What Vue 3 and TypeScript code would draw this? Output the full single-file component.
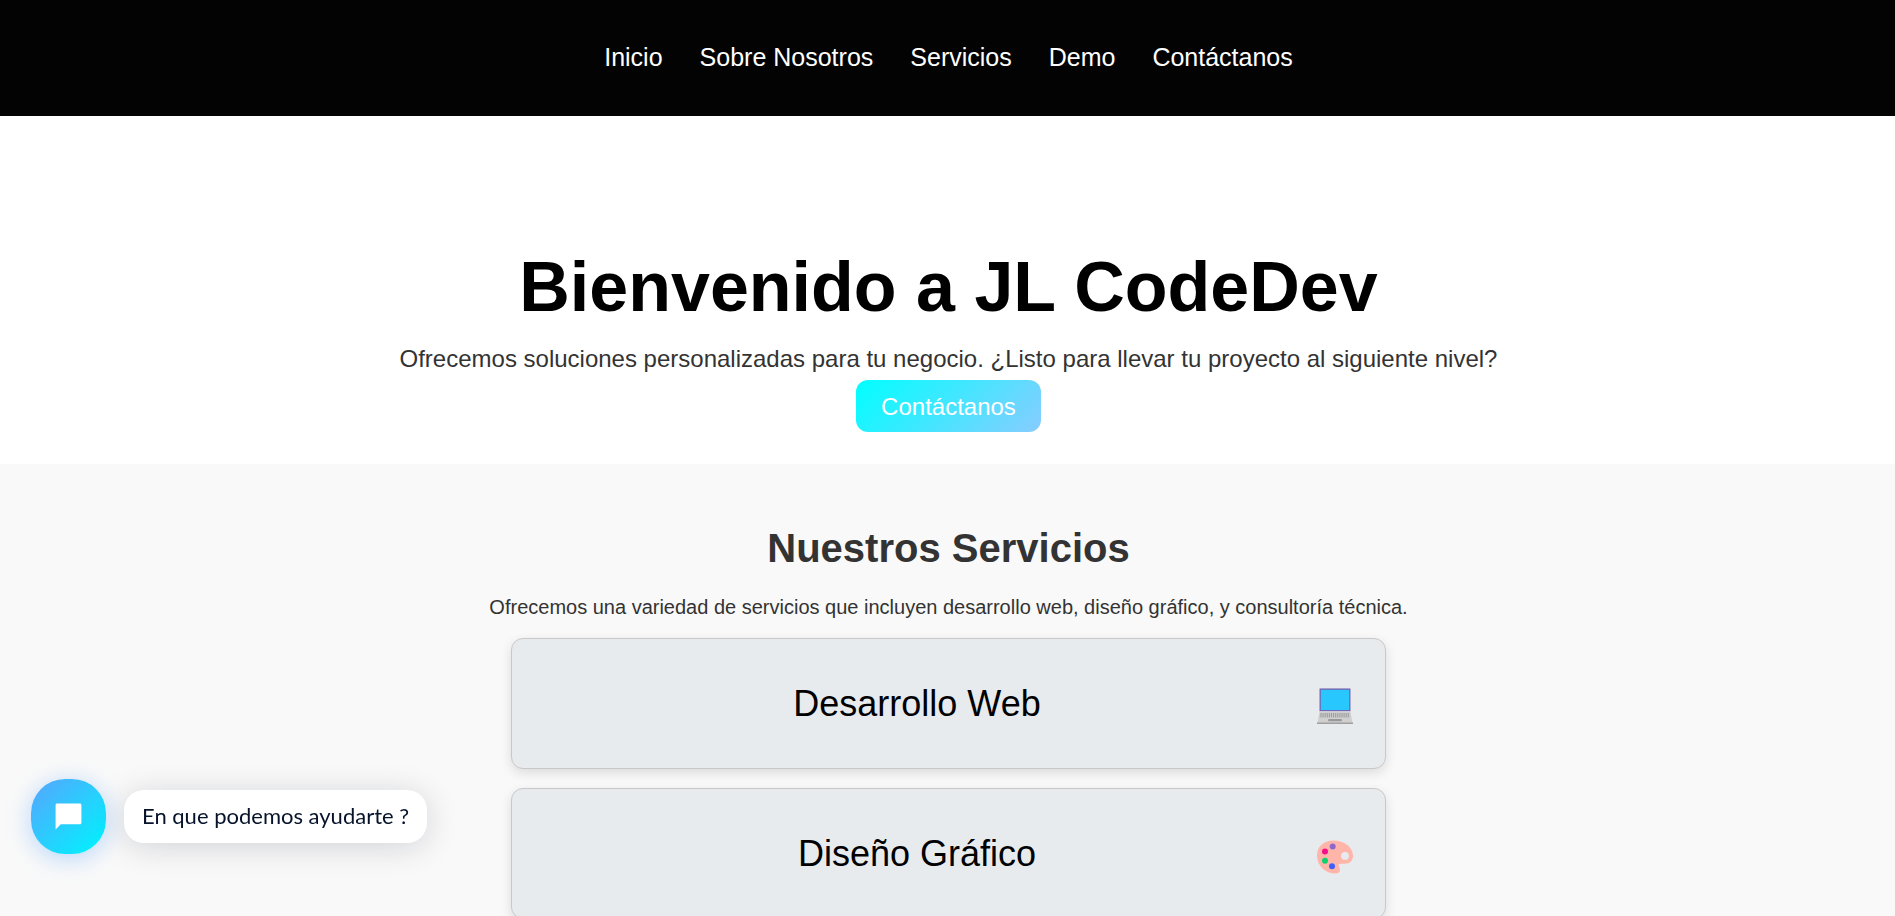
<script setup lang="ts">
interface Link {
  label: string
  href: string
}

interface Service {
  name: string
  icon: 'laptop' | 'palette'
}

const links: Link[] = [
  { label: 'Inicio', href: '#inicio' },
  { label: 'Sobre Nosotros', href: '#nosotros' },
  { label: 'Servicios', href: '#servicios' },
  { label: 'Demo', href: '#demo' },
  { label: 'Contáctanos', href: '#contacto' },
]

const services: Service[] = [
  { name: 'Desarrollo Web', icon: 'laptop' },
  { name: 'Diseño Gráfico', icon: 'palette' },
]

// Horizontal positions of the laptop's key columns
const keys: number[] = Array.from({ length: 14 }, (_, i) => 4 + i * 2.1)
</script>

<template>
  <div class="page">
    <header class="header">
      <nav class="nav">
        <a v-for="link in links" :key="link.href" :href="link.href">{{ link.label }}</a>
      </nav>
    </header>

    <main>
      <section id="inicio" class="hero">
        <h1>Bienvenido a JL CodeDev</h1>
        <p>Ofrecemos soluciones personalizadas para tu negocio. ¿Listo para llevar tu proyecto al siguiente nivel?</p>
        <a class="cta" href="#contacto">Contáctanos</a>
      </section>

      <section id="servicios" class="services">
        <h2>Nuestros Servicios</h2>
        <p>Ofrecemos una variedad de servicios que incluyen desarrollo web, diseño gráfico, y consultoría técnica.</p>
        <div class="cards">
          <button v-for="service in services" :key="service.name" type="button" class="card">
            <span class="card-name">{{ service.name }}</span>
            <span class="card-icon">
              <svg v-if="service.icon === 'laptop'" viewBox="0 0 36 36" aria-hidden="true">
                <path d="M3.4 0h29.200q1 0 1 1v22.400H2.400V1q0-1 1-1z" fill="#a79fca" />
                <path d="M2.800 1h30.400v22H2.800z" fill="#7662b3" />
                <path d="M3.800 1.800h28.400v20.300H3.800z" fill="#28c8ff" />
                <path d="M2.600 23.400h30.800L35.600 35H.4z" fill="#d0d0d0" />
                <path d="M3 24.800h30l.8 5H2.200z" fill="#cacaca" />
                <path v-for="x in keys" :key="x" :d="`M${x} 25v4.4`" stroke="#9c9c9c" stroke-width="1" />
                <path d="M11.400 31h13.400v2.300H11.100z" fill="#999" />
                <path d="M0 34.600h36V36H0z" fill="#a0a0a0" />
              </svg>
              <svg v-else viewBox="0 -1 36 36" aria-hidden="true">
                <path
                  d="M16 1.500C6.500 1.500 0 8 0 16.500c0 10.500 8.500 18 18.500 18 3 0 4.500-1.500 4.500-4 0-1.700-1.300-3-1.300-4.300 0-1.200.9-1.500 2.300-1.500h4c4.800 0 8-3.200 8-8C36 8 27 1.500 16 1.500zm12 11.500a3.900 3.900 0 1 1 0 7.800 3.900 3.900 0 0 1 0-7.800z"
                  fill="#ffb5a9"
                  fill-rule="evenodd"
                />
                <circle cx="15.700" cy="7.600" r="3" fill="#8e68c8" />
                <circle cx="8" cy="12.600" r="3" fill="#f4108c" />
                <circle cx="8" cy="21.700" r="3" fill="#0bd36b" />
                <circle cx="15" cy="27.300" r="3" fill="#3f5fff" />
              </svg>
            </span>
          </button>
        </div>
      </section>
    </main>

    <div class="chat">
      <button type="button" class="chat-button" aria-label="Abrir chat">
        <svg viewBox="0 0 24 24" aria-hidden="true">
          <path d="M20.800 2H3.200C2.500 2 2 2.500 2 3.200V22l4-4h14.800c.7 0 1.200-.5 1.200-1.200V3.200c0-.7-.5-1.200-1.200-1.200z" fill="#fff" />
        </svg>
      </button>
      <div class="chat-bubble">En que podemos ayudarte ?</div>
    </div>
  </div>
</template>

<style>
body {
  margin: 0;
  background: #f9f9f9;
}

html {
  scrollbar-width: none;
}
</style>

<style scoped>
.page {
  font-family: "Liberation Sans", Arial, sans-serif;
  color: #333;
  text-align: center;
}

.header {
  background: #030303;
  padding: 39px 20px 41px 22px;
}

.nav {
  display: flex;
  justify-content: center;
  gap: 37px;
  font-size: 25px;
  line-height: 36px;
}

.nav a {
  color: #fff;
  text-decoration: none;
}

.hero {
  background: #fff;
  padding: 131px 20px 32px 22px;
  display: flex;
  flex-direction: column;
  align-items: center;
}

h1 {
  margin: 0;
  font-size: 70px;
  line-height: 80px;
  color: #000;
}

.hero p {
  margin: 13px 0 2px;
  font-size: 24px;
  line-height: 38px;
}

.cta {
  padding: 9px 25px 7px;
  border-radius: 12px;
  background: linear-gradient(135deg, #0ff, #8cf);
  color: #fff;
  font-size: 24px;
  line-height: 36px;
  text-decoration: none;
}

.services {
  background: #f9f9f9;
  padding: 60px 20px 60px 22px;
}

h2 {
  margin: 0;
  font-size: 40px;
  line-height: 48px;
}

.services p {
  margin: 19px 0 15px;
  font-size: 20px;
  line-height: 32px;
}

.cards {
  max-width: 875px;
  margin: 0 auto;
  display: flex;
  flex-direction: column;
  gap: 19px;
}

.card {
  display: flex;
  align-items: center;
  gap: 14px;
  padding: 44px 26px;
  border: 1px solid #c8c8c8;
  border-radius: 12px;
  background: #e8ebee;
  box-shadow: 0 4px 12px rgba(0, 0, 0, 0.12);
  color: #000;
  font-family: inherit;
  font-size: 36px;
  line-height: 41px;
}

.card-name {
  flex: 1;
}

.card-icon {
  width: 49px;
  display: flex;
  justify-content: center;
  padding-top: 4px;
}

.card-icon svg {
  width: 36px;
  height: 36px;
}

.chat {
  position: fixed;
  left: 31px;
  bottom: 62px;
  display: flex;
  align-items: center;
  gap: 18px;
}

.chat-button {
  width: 75px;
  height: 75px;
  padding: 0;
  border: 0;
  border-radius: 34px;
  background: linear-gradient(135deg, #4facfe 10%, #00f2fe 95%);
  box-shadow: 0 4px 24px rgba(79, 160, 254, 0.4);
  display: flex;
  align-items: center;
  justify-content: center;
}

.chat-button svg {
  width: 31px;
  height: 31px;
}

.chat-bubble {
  padding: 11px 18px 13px;
  border-radius: 20px;
  background: #fff;
  box-shadow: 0 4px 32px rgba(0, 18, 46, 0.16);
  color: #06132b;
  font-family: Lato, "Open Sans", sans-serif;
  font-size: 22px;
  line-height: 29px;
}
</style>
